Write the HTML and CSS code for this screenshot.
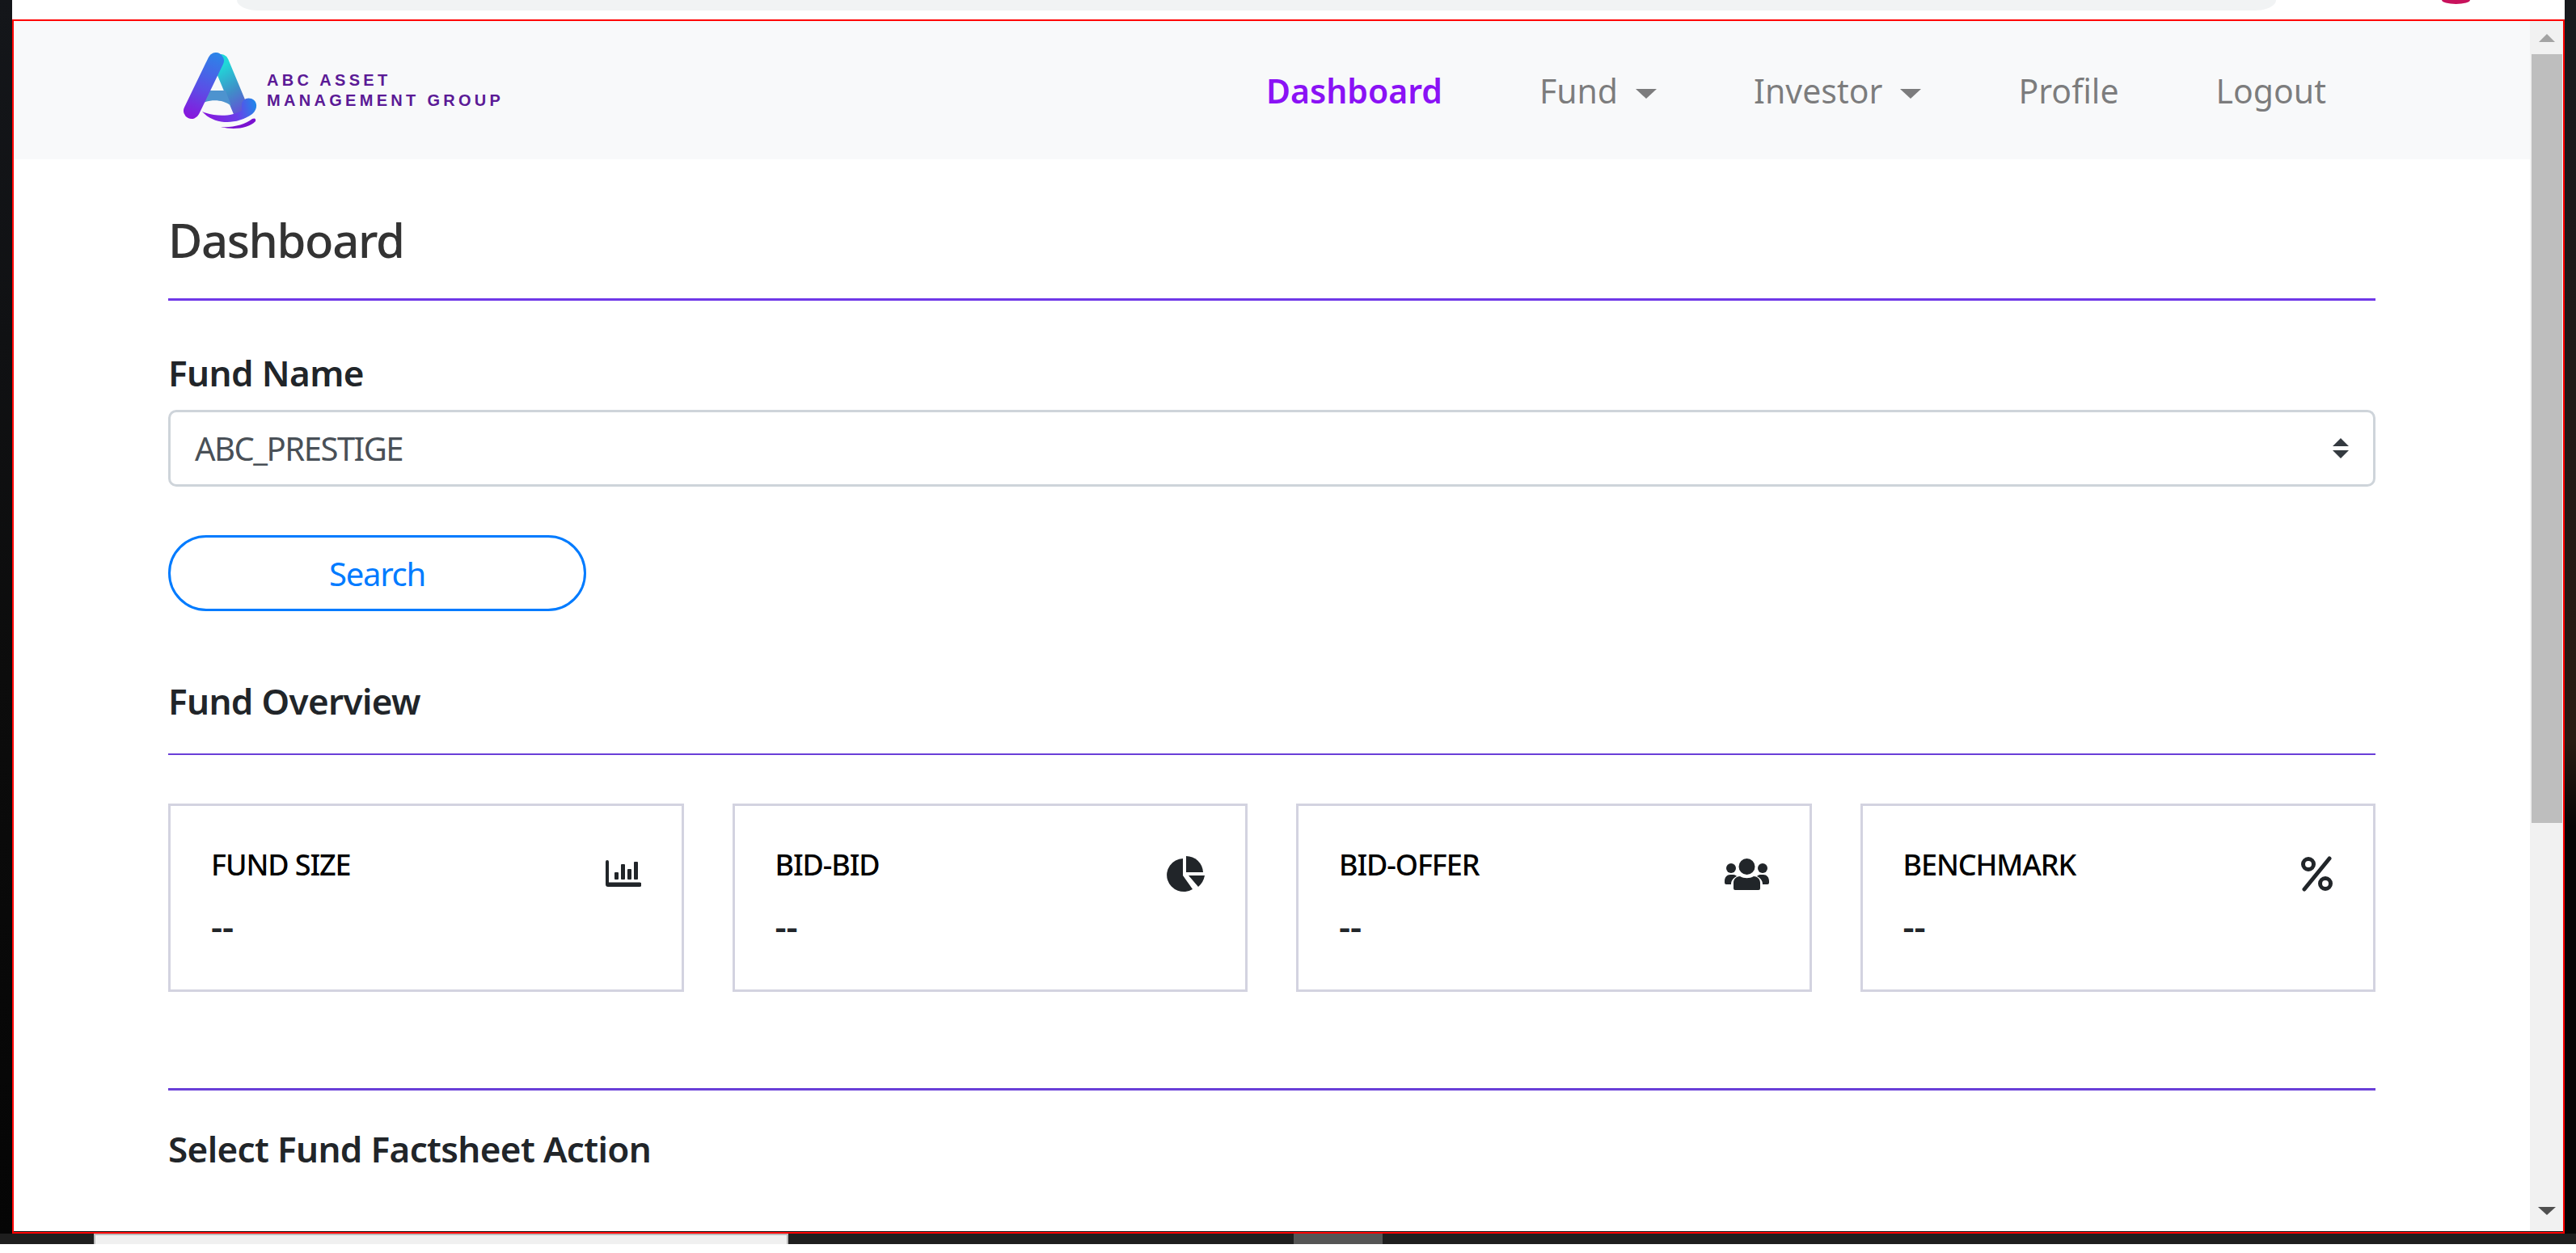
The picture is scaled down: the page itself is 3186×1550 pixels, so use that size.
FILE: index.html
```html
<!DOCTYPE html>
<html lang="en">
<head>
	<meta charset="UTF-8">
	<title>Dashboard</title>
	<link rel="stylesheet" href="styles.css">
</head>
<body>
	<div class="desktop">
		<div class="side side-left"></div>
		<div class="window">
			<div class="browser-strip">
				<div class="address-bar"></div>
				<div class="profile-dot"></div>
			</div>
			<div class="frame">
				<div class="page">
					<nav class="navbar">
						<a class="brand" href="#">
							<svg class="brand-mark" width="91" height="94" viewBox="0 0 91 94">
								<defs>
									<linearGradient id="legLeft" gradientUnits="userSpaceOnUse" x1="42" y1="0" x2="8" y2="82">
										<stop offset="0" stop-color="#2a86e8"/>
										<stop offset="0.55" stop-color="#5a4fe6"/>
										<stop offset="1" stop-color="#8a14dc"/>
									</linearGradient>
									<linearGradient id="legRight" gradientUnits="userSpaceOnUse" x1="42" y1="20" x2="76" y2="76">
										<stop offset="0" stop-color="#20d8d8"/>
										<stop offset="0.5" stop-color="#3f8fc8"/>
										<stop offset="1" stop-color="#6a48d8"/>
									</linearGradient>
									<linearGradient id="swoosh" gradientUnits="userSpaceOnUse" x1="23" y1="80" x2="90" y2="62">
										<stop offset="0" stop-color="#8a14dc"/>
										<stop offset="0.6" stop-color="#6a3ee8"/>
										<stop offset="1" stop-color="#1f8aea"/>
									</linearGradient>
								</defs>
								<path d="M46 12 L71 72" stroke="url(#legRight)" stroke-width="20" stroke-linecap="round" fill="none"/>
								<path d="M26 47 H52 L59 66 C48 58 36 58 24 62 Z" fill="#4d93cf"/>
								<path d="M40 10 L10 72" stroke="url(#legLeft)" stroke-width="20" stroke-linecap="round" fill="none"/>
								<path d="M23 73 C35 87 62 92 85 76 C92 70 92 60 84 57 C78 55 73 58 72 64 L72 72 C60 79 40 80 23 73 Z" fill="url(#swoosh)"/>
								<path d="M46 92 C62 93 76 89 85 82 Q90 80 89 85 C80 94 62 96 46 92 Z" fill="#7a12d0"/>
							</svg>
							<span class="brand-text">ABC ASSET<br>MANAGEMENT GROUP</span>
						</a>
						<ul class="nav-links">
							<li><a class="active" href="#">Dashboard</a></li>
							<li><a class="dropdown" href="#">Fund</a></li>
							<li><a class="dropdown" href="#">Investor</a></li>
							<li><a href="#">Profile</a></li>
							<li><a href="#">Logout</a></li>
						</ul>
					</nav>

					<main class="content">
						<h1 class="page-title">Dashboard</h1>

						<label class="field-label">Fund Name</label>
						<div class="select-box">
							<span>ABC_PRESTIGE</span>
							<svg class="select-arrows" width="20" height="25" viewBox="0 0 20 25"><path d="M10 0 L20 10 H0 Z M0 15 H20 L10 25 Z" fill="#343a40"/></svg>
						</div>
						<button class="search-btn">Search</button>

						<h2 class="section-title">Fund Overview</h2>

						<div class="cards">
							<div class="card">
								<div class="card-text">
									<div class="card-label">FUND SIZE</div>
									<div class="card-value">--</div>
								</div>
								<svg class="card-icon" width="44" height="33" viewBox="0 0 44 33">
									<path d="M0 2 a2 2 0 0 1 4 0 V27.5 H42 a2.75 2.75 0 0 1 0 5.5 H3 a3 3 0 0 1 -3 -3 Z" fill="#212529"/>
									<rect x="11" y="15" width="5" height="9" rx="1" fill="#212529"/>
									<rect x="19" y="5" width="5" height="19" rx="1" fill="#212529"/>
									<rect x="27" y="11" width="5" height="13" rx="1" fill="#212529"/>
									<rect x="35" y="2" width="5" height="22" rx="1" fill="#212529"/>
								</svg>
							</div>
							<div class="card">
								<div class="card-text">
									<div class="card-label">BID-BID</div>
									<div class="card-value">--</div>
								</div>
								<svg class="card-icon icon-pie" width="48" height="44" viewBox="0 0 48 44">
									<path d="M21 3 A21 20.5 0 1 0 33 41 L21 24 Z" fill="#212529"/>
									<path d="M25 0 A21 21 0 0 1 46 20 H25 Z" fill="#212529"/>
									<path d="M28 24 H48 A24 24 0 0 1 40 38 Z" fill="#212529"/>
								</svg>
							</div>
							<div class="card">
								<div class="card-text">
									<div class="card-label">BID-OFFER</div>
									<div class="card-value">--</div>
								</div>
								<svg class="card-icon icon-users" width="55" height="39" viewBox="0 0 55 39">
									<circle cx="27.5" cy="10" r="10" fill="#212529"/>
									<circle cx="8" cy="12" r="6" fill="#212529"/>
									<circle cx="47" cy="12" r="6" fill="#212529"/>
									<path d="M11 37 V30 C11 25 15 22 19 22 C24 25 31 25 36 22 C40 22 44 25 44 30 V37 Q44 39 42 39 H13 Q11 39 11 37 Z" fill="#212529"/>
									<path d="M0 28 C0 23 3 20 7 20 H11 C13 20 14 21 15 22 C11 24 8 27 8 32 H2 Q0 32 0 30 Z" fill="#212529"/>
									<path d="M55 28 C55 23 52 20 48 20 H44 C42 20 41 21 40 22 C44 24 47 27 47 32 H53 Q55 32 55 30 Z" fill="#212529"/>
								</svg>
							</div>
							<div class="card">
								<div class="card-text">
									<div class="card-label">BENCHMARK</div>
									<div class="card-value">--</div>
								</div>
								<svg class="card-icon icon-percent" width="39" height="44" viewBox="0 0 39 44">
									<path d="M35 3 L4 41" stroke="#212529" stroke-width="5" stroke-linecap="round"/>
									<circle cx="9" cy="10" r="6.5" fill="none" stroke="#212529" stroke-width="5"/>
									<circle cx="30" cy="34" r="6.5" fill="none" stroke="#212529" stroke-width="5"/>
								</svg>
							</div>
						</div>

						<h2 class="section-title action-title">Select Fund Factsheet Action</h2>
						<!-- tops of the next row, cut off by the frame -->
						<div class="next-row">
							<span class="peek peek-blue"></span>
							<span class="peek peek-a"></span>
							<span class="peek peek-b"></span>
							<span class="peek peek-c"></span>
						</div>
					</main>
				</div>
				<div class="scrollbar">
					<div class="scroll-btn"><span class="arrow-up"></span></div>
					<div class="scroll-thumb"></div>
					<div class="scroll-rest"></div>
					<div class="scroll-btn scroll-btn-down"><span class="arrow-down"></span></div>
				</div>
			</div>
		</div>
		<div class="side side-right"></div>
	</div>
	<div class="taskbar">
		<div class="task-window"></div>
		<div class="task-item"></div>
	</div>
	<div class="bottom-gap"></div>
</body>
</html>
```

FILE: styles.css
```css
*{padding:0;margin:0;box-sizing:border-box;}
html,body{height:100%;overflow:hidden;}
body{background:#fff;font-family:"Noto Sans","Open Sans",sans-serif;color:#212529;display:flex;flex-direction:column;}
a{text-decoration:none;}
ul{list-style:none;}

.desktop{display:flex;height:1526px;background:#0a0a0a;}
.side{background:linear-gradient(#14161a 0,#0c0c0c 55%,#050505 100%);}
.side-left{width:15px;}
.side-right{width:14px;background:linear-gradient(#17191d 0,#2a1b12 60%,#060504 67%,#050505 100%);}
.window{width:3157px;display:flex;flex-direction:column;}

.browser-strip{height:24px;background:#fff;display:flex;padding-left:278px;}
.address-bar{width:2522px;height:13px;background:#f1f3f4;border-radius:0 0 26px 26px / 0 0 13px 13px;}
.profile-dot{width:35px;height:5px;margin-left:205px;background:#c8125c;border-radius:0 0 50% 50% / 0 0 100% 100%;}

.frame{height:1502px;border:2px solid #f00;display:flex;background:#fff;}
.page{flex:1;overflow:hidden;border-bottom:1px solid #111;}

.scrollbar{width:41px;background:#f1f1f1;display:flex;flex-direction:column;align-items:center;border-bottom:1px solid #111;}
.scroll-btn{height:41px;flex:none;display:flex;justify-content:center;padding-top:16px;}
.scroll-btn-down{padding-top:11px;}
.arrow-up{width:0;height:0;border-left:10px solid transparent;border-right:10px solid transparent;border-bottom:10px solid #a3a3a3;}
.arrow-down{width:0;height:0;border-left:11px solid transparent;border-right:11px solid transparent;border-top:10px solid #505050;}
.scroll-thumb{width:38px;height:951px;flex:none;background:#bebebe;}
.scroll-rest{flex:1;}

.navbar{height:171px;background:#f8f9fa;display:flex;align-items:center;justify-content:space-between;padding:0 252px 0 210px;}
.brand{display:flex;align-items:center;gap:12px;}
.brand-mark{flex:none;}
.brand-text{font-family:"Liberation Sans",Arial,sans-serif;font-weight:700;font-size:20px;line-height:25px;letter-spacing:4.3px;color:#5b1a96;}
.nav-links{display:flex;align-items:center;gap:120px;font-size:41px;line-height:60px;}
.nav-links a{color:rgba(0,0,0,.5);display:block;}
.nav-links a.active{color:#8a12f5;font-weight:600;}
.nav-links a.dropdown::after{content:"";display:inline-block;margin-left:22px;vertical-align:6px;border-top:12px solid;border-left:13px solid transparent;border-right:13px solid transparent;}

.content{margin:0 191px;}
.page-title{font-size:58px;font-weight:500;letter-spacing:-1.4px;line-height:72px;color:#333;margin-top:64px;padding-bottom:36px;border-bottom:3px solid #7038e8;}
.field-label{display:block;font-size:44px;font-weight:600;letter-spacing:-.6px;line-height:60px;margin-top:59px;margin-bottom:16px;}
.select-box{height:95px;border:3px solid #ced4da;border-radius:10px;display:flex;align-items:center;justify-content:space-between;padding:0 30px 0 30px;font-size:40px;letter-spacing:-1.5px;color:#495057;}
.select-arrows{flex:none;}
.search-btn{display:block;width:517px;height:94px;margin-top:60px;border:3px solid #007bff;border-radius:47px;background:#fff;color:#007bff;font-family:inherit;font-size:40px;letter-spacing:-1.3px;}
.section-title{font-size:44px;font-weight:600;letter-spacing:-.65px;line-height:60px;margin-top:81px;padding-bottom:35px;border-bottom:2px solid #6a3fd8;}

.cards{display:grid;grid-template-columns:repeat(4,1fr);gap:60px;margin-top:60px;padding-bottom:119px;border-bottom:3px solid #6a3fd8;}
.card{height:233px;border:3px solid #d3d3e0;padding:48px 50px 0 50px;display:flex;justify-content:space-between;align-items:flex-start;}
.card-label{font-size:36px;font-weight:500;letter-spacing:-1.1px;line-height:50px;color:#000;}
.card-value{font-size:44px;font-weight:600;line-height:60px;margin-top:20px;}
.card-icon{flex:none;margin-top:19px;}
.icon-pie{margin-top:14px;}
.icon-users{margin-top:17px;}
.icon-percent{margin-top:14px;}
.action-title{margin-top:42px;padding-bottom:0;border-bottom:0;}

.next-row{display:flex;margin-top:72px;height:2px;}
.peek{height:2px;background:#8a8f94;}
.peek-blue{width:10px;margin-left:1px;background:#3b8df0;}
.peek-a{width:8px;margin-left:738px;}
.peek-b{width:6px;margin-left:738px;}
.peek-c{width:2px;margin-left:114px;}

.taskbar{height:13px;background:#1e1e1e;display:flex;padding-left:116px;}
.task-window{width:859px;background:#f0f0f0;border:solid #bbb;border-width:2px 2px 0 2px;}
.task-item{width:110px;margin-left:625px;background:#555;}
.bottom-gap{flex:1;background:#fff;}
```
